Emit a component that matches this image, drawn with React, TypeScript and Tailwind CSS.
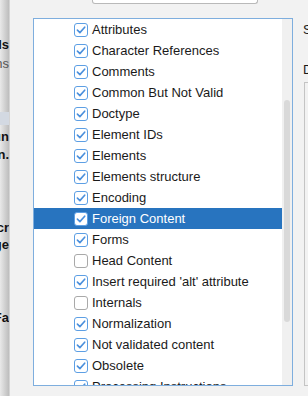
import React from "react";

const items: { label: string; checked: boolean; selected?: boolean }[] = [
  { label: "Attributes", checked: true },
  { label: "Character References", checked: true },
  { label: "Comments", checked: true },
  { label: "Common But Not Valid", checked: true },
  { label: "Doctype", checked: true },
  { label: "Element IDs", checked: true },
  { label: "Elements", checked: true },
  { label: "Elements structure", checked: true },
  { label: "Encoding", checked: true },
  { label: "Foreign Content", checked: true, selected: true },
  { label: "Forms", checked: true },
  { label: "Head Content", checked: false },
  { label: "Insert required 'alt' attribute", checked: true },
  { label: "Internals", checked: false },
  { label: "Normalization", checked: true },
  { label: "Not validated content", checked: true },
  { label: "Obsolete", checked: true },
  { label: "Processing Instructions", checked: true },
];

function Box({ checked }: { checked: boolean }) {
  return (
    <span
      className={
        checked
          ? "w-[14px] h-[14px] shrink-0 rounded-[3px] border border-[#5d9fe4] bg-white flex items-center justify-center"
          : "w-[14px] h-[14px] shrink-0 rounded-[3px] border border-[#a9a9a9] bg-white flex items-center justify-center"
      }
    >
      {checked && (
        <svg width="10" height="10" viewBox="0 0 10 10">
          <path d="M1.4 5.1 L3.9 7.6 L8.7 2.2" stroke="#4a8fdc" strokeWidth="1.6" fill="none" strokeLinecap="round" strokeLinejoin="round" />
        </svg>
      )}
    </span>
  );
}

export default function App() {
  return (
    <div className="w-[308px] h-[396px] overflow-hidden flex bg-[#f2f2f2] font-['Liberation_Sans',Arial,sans-serif] text-[13px] text-[#1a1a1a]">
      <div className="w-[10px] shrink-0 bg-linear-to-r from-[#e9e9e9] to-[#bdbdbd] flex flex-col items-end overflow-hidden border-r border-[#d4d4d4] leading-[16px]">
        <div className="mt-[37px] whitespace-nowrap font-bold text-[#111]">Details</div>
        <div className="mt-[3px] whitespace-nowrap text-[#555]">Actions</div>
        <div className="mt-[40px] h-[13px] w-full shrink-0 bg-[#d3d9e2]" />
        <div className="mt-[4px] whitespace-nowrap font-bold text-[#111]">Run</div>
        <div className="mt-[2px] whitespace-nowrap font-bold text-[#111]">Run.</div>
        <div className="mt-[57px] whitespace-nowrap font-bold text-[#111]">Script cr</div>
        <div className="mt-[1px] whitespace-nowrap font-bold text-[#111]">Language</div>
        <div className="mt-[57px] whitespace-nowrap font-bold text-[#111]">Fa</div>
      </div>
      <div className="flex-1 flex flex-col min-w-0">
        <div className="ml-[82px] w-[166px] h-[4px] shrink-0 bg-white border-x border-b border-[#b9b9b9] rounded-b-[3px]" />
        <div className="flex mt-[14px] ml-[23px]">
          <div className="w-[260px] h-[368px] shrink-0 border border-[#7eaede] bg-white flex overflow-hidden">
            <div className="flex-1 flex flex-col overflow-hidden">
              {items.map((it) => (
                <div
                  key={it.label}
                  className={
                    it.selected
                      ? "h-[21px] shrink-0 flex items-center pl-[40px] gap-[4px] bg-[#2874bf] text-white"
                      : "h-[21px] shrink-0 flex items-center pl-[40px] gap-[4px]"
                  }
                >
                  <Box checked={it.checked} />
                  <span className="whitespace-nowrap leading-[16px]">{it.label}</span>
                </div>
              ))}
            </div>
            <div className="w-[10px] shrink-0 bg-[#f0f0f0] pt-[81px] pl-[2px]">
              <div className="w-[6px] h-[222px] rounded-full bg-[#d9d9d9]" />
            </div>
          </div>
          <div className="ml-[10px] flex flex-col leading-[16px] whitespace-nowrap">
            <div className="mt-[4px]">Severity</div>
            <div className="mt-[24px]">Description</div>
            <div className="mt-[4px] ml-[1px] w-[40px] h-[304px] border border-[#c4c4c4] bg-[#f2f2f2]" />
          </div>
        </div>
      </div>
    </div>
  );
}
